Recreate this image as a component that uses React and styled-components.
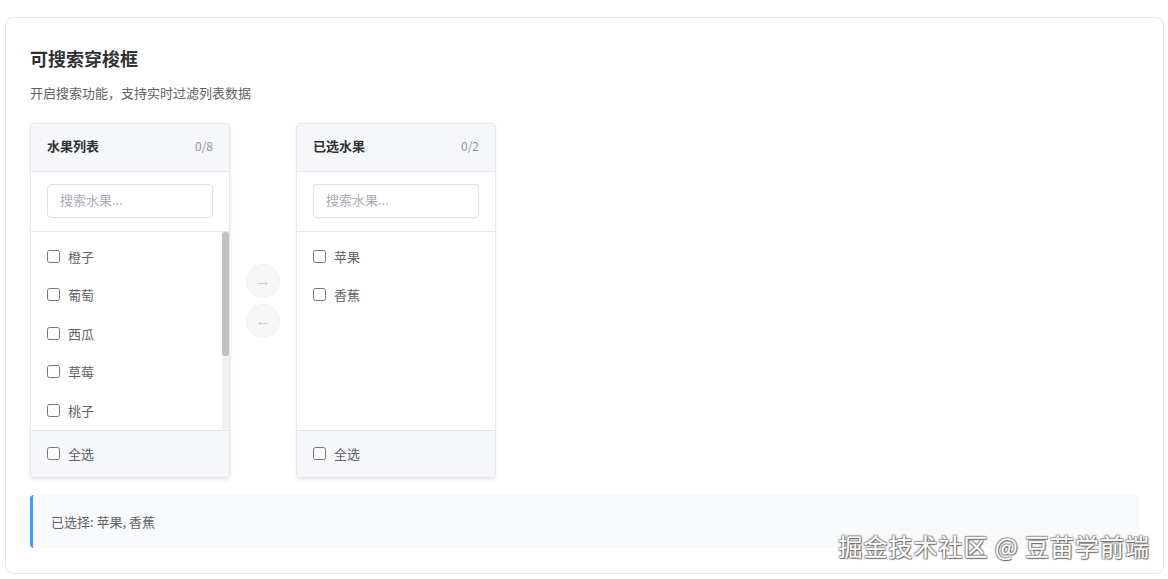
import React from 'react';
import styled, { createGlobalStyle } from 'styled-components';

const GlobalStyle = createGlobalStyle`
  html, body {
    margin: 0;
    padding: 0;
    background: #ffffff;
    font-family: "Noto Sans CJK SC", "Noto Sans", sans-serif;
  }
`;

const Page = styled.div`
  padding: 17px 4px 7px 5px;
  position: relative;
`;

const Card = styled.div`
  border: 1px solid #e6e6e6;
  border-radius: 8px;
  padding: 24px;
  height: 507px;
  background: #fff;
`;

const Title = styled.h3`
  margin: 0;
  font-size: 18px;
  font-weight: 700;
  color: #303133;
  line-height: 32px;
`;

const Desc = styled.p`
  margin: 9px 0 20px;
  font-size: 13px;
  color: #606266;
  line-height: 20px;
`;

const Transfer = styled.div`
  display: flex;
  align-items: center;
`;

const Panel = styled.div`
  box-sizing: border-box;
  width: 200px;
  height: 355px;
  border: 1px solid #e4e7ed;
  border-radius: 4px;
  display: flex;
  flex-direction: column;
  overflow: hidden;
  box-shadow: 0 2px 4px rgba(0, 0, 0, 0.08);
  background: #fff;
`;

const PanelHeader = styled.div`
  box-sizing: border-box;
  height: 48px;
  background: #f5f7fa;
  border-bottom: 1px solid #e4e7ed;
  display: flex;
  align-items: center;
  justify-content: space-between;
  padding: 0 16px 4px;
  flex-shrink: 0;
`;

const PanelTitle = styled.span`
  font-size: 13px;
  font-weight: 600;
  color: #303133;
`;

const Count = styled.span`
  font-size: 12px;
  color: #909399;
`;

const SearchBox = styled.div`
  padding: 12px 16px 13px;
  border-bottom: 1px solid #e4e7ed;
  flex-shrink: 0;
`;

const SearchInput = styled.input`
  box-sizing: border-box;
  width: 100%;
  height: 34px;
  border: 1px solid #dcdfe6;
  border-radius: 4px;
  padding: 0 12px 3px;
  font-size: 13px;
  font-family: inherit;
  color: #606266;
  outline: none;
  &::placeholder {
    color: #a8abb2;
  }
`;

const ListWrap = styled.div`
  flex: 1;
  min-height: 0;
  position: relative;
  overflow: hidden;
`;

const List = styled.div`
  padding: 5px 0 6px;
`;

const ScrollTrack = styled.div`
  position: absolute;
  top: 0;
  right: 0;
  bottom: 0;
  width: 7px;
  background: #f1f1f1;
`;

const ScrollThumb = styled.div`
  width: 7px;
  height: 124px;
  background: #c1c1c1;
  border-radius: 3px;
`;

const Item = styled.label`
  display: flex;
  align-items: center;
  height: 38.5px;
  padding: 0 16px;
  font-size: 13px;
  color: #606266;
  gap: 8px;
`;

const Check = styled.input`
  margin: 0;
  width: 13px;
  height: 13px;
`;

const PanelFooter = styled.div`
  box-sizing: border-box;
  height: 47px;
  background: #f5f7fa;
  border-top: 1px solid #e4e7ed;
  display: flex;
  align-items: center;
  padding: 0 16px 2px;
  gap: 8px;
  font-size: 13px;
  color: #606266;
  flex-shrink: 0;
`;

const Actions = styled.div`
  width: 66px;
  display: flex;
  flex-direction: column;
  align-items: center;
  gap: 6px;
`;

const ArrowButton = styled.button`
  width: 34px;
  height: 34px;
  border-radius: 50%;
  border: 1px solid #f2f2f3;
  background: #f7f7f8;
  color: #c8cacf;
  font-size: 16px;
  display: flex;
  align-items: center;
  justify-content: center;
  padding: 0;
  cursor: not-allowed;
`;

const Result = styled.div`
  margin-top: 17px;
  height: 53px;
  box-sizing: border-box;
  background: #f8f9fa;
  border-left: 3px solid #409eff;
  border-radius: 4px;
  padding: 0 18px;
  display: flex;
  align-items: center;
  font-size: 13px;
  color: #606266;
`;

const Watermark = styled.div`
  position: absolute;
  right: 18px;
  bottom: 20px;
  font-size: 24px;
  line-height: 30px;
  color: #ffffff;
  letter-spacing: 1px;
  text-shadow: 1px 1px 1px #6b6b6b, -1px -1px 1px #a0a0a0, 1px -1px 1px #a0a0a0, -1px 1px 1px #a0a0a0;
`;

const left = ['橙子', '葡萄', '西瓜', '草莓', '桃子', '芒果', '菠萝', '樱桃'];
const right = ['苹果', '香蕉'];
const VISIBLE = 5;

function TransferPanel({ title, count, items, scroll }) {
  const shown = scroll ? items.slice(0, VISIBLE) : items;
  return (
    <Panel>
      <PanelHeader>
        <PanelTitle>{title}</PanelTitle>
        <Count>{count}</Count>
      </PanelHeader>
      <SearchBox>
        <SearchInput placeholder="搜索水果..." />
      </SearchBox>
      <ListWrap>
        <List>
          {shown.map((name) => (
            <Item key={name}>
              <Check type="checkbox" />
              {name}
            </Item>
          ))}
        </List>
        {scroll && (
          <ScrollTrack>
            <ScrollThumb />
          </ScrollTrack>
        )}
      </ListWrap>
      <PanelFooter>
        <Check type="checkbox" />
        全选
      </PanelFooter>
    </Panel>
  );
}

export default function App() {
  return (
    <Page>
      <GlobalStyle />
      <Card>
        <Title>可搜索穿梭框</Title>
        <Desc>开启搜索功能，支持实时过滤列表数据</Desc>
        <Transfer>
          <TransferPanel title="水果列表" count="0/8" items={left} scroll />
          <Actions>
            <ArrowButton disabled>→</ArrowButton>
            <ArrowButton disabled>←</ArrowButton>
          </Actions>
          <TransferPanel title="已选水果" count="0/2" items={right} />
        </Transfer>
        <Result>已选择: 苹果, 香蕉</Result>
      </Card>
      <Watermark>掘金技术社区 @ 豆苗学前端</Watermark>
    </Page>
  );
}
